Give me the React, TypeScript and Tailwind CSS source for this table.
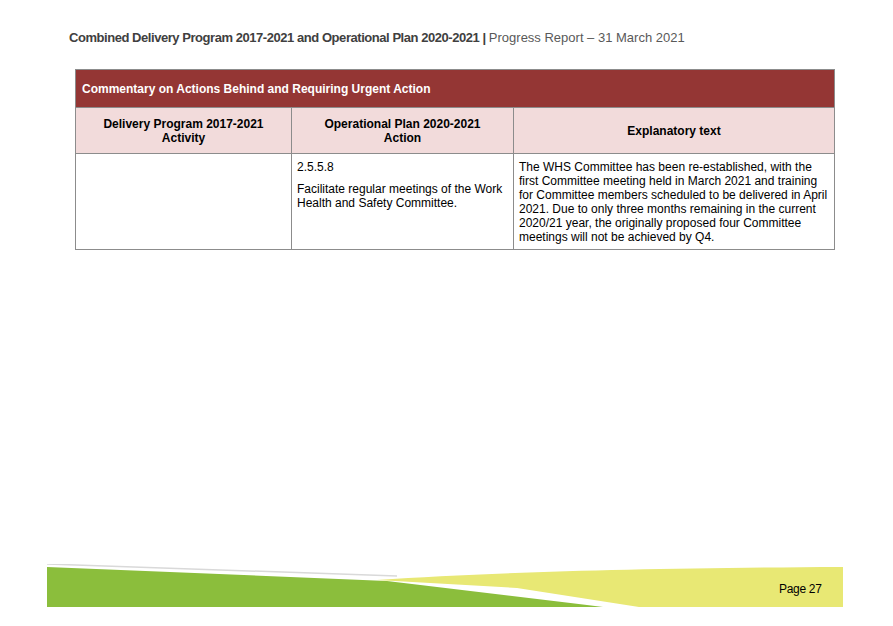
import React from "react";

export default function App() {
  const font = { fontFamily: '"Liberation Sans", Arial, sans-serif' };
  return (
    <div className="w-[893px] h-[626px] bg-white flex flex-col overflow-hidden" style={font}>
      <div className="pt-[30px] pl-[69px] h-[69px] text-[13px] leading-[16px] text-[#404040] whitespace-nowrap">
        <span className="font-bold tracking-[-0.45px]">Combined Delivery Program 2017-2021 and Operational Plan 2020-2021 | </span>
        <span className="text-[#595959]">Progress Report – 31 March 2021</span>
      </div>
      <div className="ml-[75px] w-[760px] border border-[#8c8c8c] text-[12px] leading-[14px] text-black">
        <div className="h-[38px] bg-[#943634] text-white font-bold flex items-center pl-[6px] border-b border-[#8c8c8c]">
          Commentary on Actions Behind and Requiring Urgent Action
        </div>
        <div className="grid grid-cols-[216px_222px_1fr] bg-[#f2dbdb] font-bold h-[46px] border-b border-[#8c8c8c]">
          <div className="flex items-center justify-center text-center border-r border-[#8c8c8c]">
            Delivery Program 2017-2021<br />Activity
          </div>
          <div className="flex items-center justify-center text-center border-r border-[#8c8c8c]">
            Operational Plan 2020-2021<br />Action
          </div>
          <div className="flex items-center justify-center text-center">Explanatory text</div>
        </div>
        <div className="grid grid-cols-[216px_222px_1fr] h-[95px]">
          <div className="border-r border-[#8c8c8c]" />
          <div className="border-r border-[#8c8c8c] pl-[5px] pr-[4px] pt-[6px]">
            <p>2.5.5.8</p>
            <p className="mt-[8px]">Facilitate regular meetings of the Work Health and Safety Committee.</p>
          </div>
          <div className="pl-[5px] pr-[4px] pt-[6px]">
            The WHS Committee has been re-established, with the first Committee meeting held in March 2021 and training for Committee members scheduled to be delivered in April 2021. Due to only three months remaining in the current 2020/21 year, the originally proposed four Committee meetings will not be achieved by Q4.
          </div>
        </div>
      </div>
      <div className="mt-auto mb-[18px] ml-[47px] w-[797px] h-[44px] relative">
        <svg width="797" height="44" viewBox="0 0 797 44" className="absolute inset-0">
          <path d="M0 0 L350 12" stroke="#d9d9d9" strokeWidth="1.5" fill="none" />
          <path d="M0 3 L340 17 L540 41 L556 43 L0 43 Z" fill="#8bbe3c" />
          <path d="M330 16 C 450 8, 600 4, 796 3 L796 43 L592 43 L470 24 Z" fill="#e8e874" />
        </svg>
        <div className="absolute left-[732px] top-[18px] text-[12px] leading-[14px] text-black tracking-[-0.3px]">
          Page 27
        </div>
      </div>
    </div>
  );
}
